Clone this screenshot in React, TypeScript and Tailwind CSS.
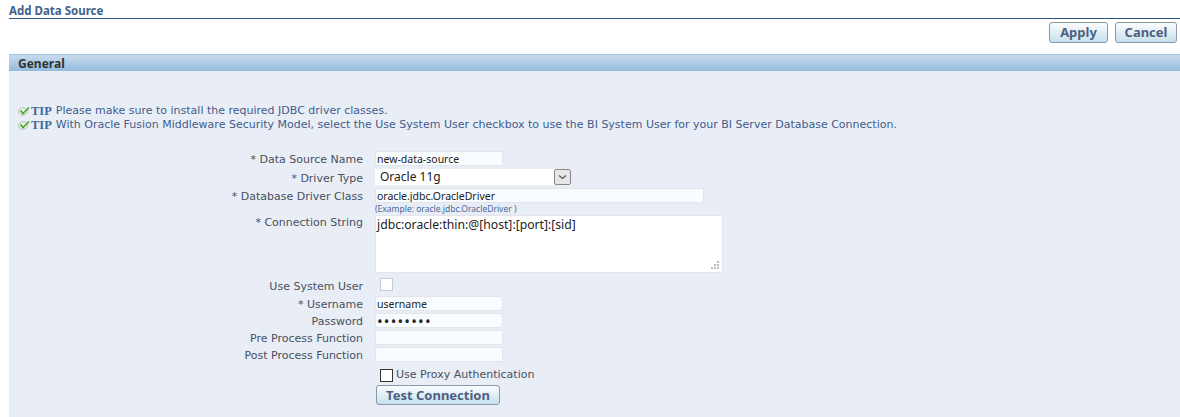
const FONT = "font-['Tahoma','DejaVu_Sans',sans-serif]";
const FIELD_FONT = "font-['Noto_Sans',sans-serif]";
const BOLD_FONT = "font-['Noto_Sans',sans-serif] font-bold";

const INPUT = `block h-[15px] rounded-[2px] border border-[#e1e5eb] bg-[#f8fcff] pl-px text-[10.5px] leading-[13px] text-[#222] ${FIELD_FONT}`;
const BTN = `rounded-[3px] border border-[#8b98a8] bg-gradient-to-b from-[#fbfdfe] to-[#c6e0ec] text-[13px] text-[#4f5f80] ${BOLD_FONT}`;

function Tip({ text }: { text: string }) {
  return (
    <div className="flex h-[14px] items-center text-[11px] leading-[14px] text-[#3f5c8c]">
      <svg width="12" height="10" viewBox="0 0 12 10" className="mr-px">
        <ellipse cx="5" cy="5.5" rx="4.5" ry="3.8" fill="#e8f3e4" stroke="#9fb8ac" strokeWidth="0.8" />
        <path d="M2.5 4.5 L5 7.5 L11 1.5" fill="none" stroke="#45a528" strokeWidth="1.6" />
      </svg>
      <b className="mr-[4px] font-['Liberation_Serif',serif] text-[12.5px] text-[#3d6a9e]">TIP</b>
      {text}
    </div>
  );
}

function Row({
  label,
  required,
  className,
  labelClass,
  children,
}: {
  label?: string;
  required?: boolean;
  className?: string;
  labelClass?: string;
  children: React.ReactNode;
}) {
  return (
    <div className={"flex " + (className ?? "")}>
      <div className={"h-[15px] w-[354px] text-right text-[11px] leading-[15px] text-[#475060] " + (labelClass ?? "pt-px")}>
        {required && "* "}
        {label}
      </div>
      <div className="ml-[12px]">{children}</div>
    </div>
  );
}

export default function App() {
  return (
    <div className={`h-[417px] w-[1180px] overflow-hidden bg-white pl-[9px] ${FONT}`}>
      <div className={`h-[19px] border-b border-[#2f5587] pt-[4px] text-[11.5px] leading-[14px] text-[#3f5f8f] ${BOLD_FONT}`}>
        Add Data Source
      </div>
      <div className="flex h-[35px] justify-end gap-[7px] pt-[3px] pr-[3px]">
        <button className={`${BTN} h-[21px] w-[59px]`}>Apply</button>
        <button className={`${BTN} h-[21px] w-[62px]`}>Cancel</button>
      </div>
      <div className={`h-[17px] border-t border-[#a5c1dc] bg-gradient-to-b from-[#c8dbed] to-[#94bbdc] pl-[9px] text-[12px] leading-[17px] text-[#333] ${BOLD_FONT}`}>
        General
      </div>
      <div className="h-[346px] bg-[#e9eef6]">
        <div className="pl-[9px] pt-[33px]">
          <Tip text="Please make sure to install the required JDBC driver classes." />
          <Tip text="With Oracle Fusion Middleware Security Model, select the Use System User checkbox to use the BI System User for your BI Server Database Connection." />
        </div>
        <div className="pt-[19px]">
          <Row label="Data Source Name" required>
            <input readOnly value="new-data-source" className={`${INPUT} w-[128px]`} />
          </Row>
          <Row label="Driver Type" required className="mt-[3px]" labelClass="pt-[2px]">
            <div className={`flex h-[16px] w-[196px] items-center justify-between bg-white pl-[5px] text-[12px] text-[#222] ${FIELD_FONT}`}>
              Oracle 11g
              <span className="flex h-[16px] w-[17px] items-center justify-center rounded-[2px] border border-[#888] bg-[#e6e6e6]">
                <svg width="9" height="6" viewBox="0 0 9 6">
                  <path d="M1 1.5 L4.5 4.5 L8 1.5" fill="none" stroke="#555" strokeWidth="1.2" />
                </svg>
              </span>
            </div>
          </Row>
          <Row label="Database Driver Class" required className="mt-[3px]">
            <input readOnly value="oracle.jdbc.OracleDriver" className={`${INPUT} w-[329px]`} />
            <div className={`h-[12px] text-[8.5px] leading-[12px] text-[#44689c] ${FIELD_FONT}`}>(Example: oracle.jdbc.OracleDriver )</div>
          </Row>
          <Row label="Connection String" required labelClass="pt-0">
            <div className={`relative h-[58px] w-[348px] rounded-[2px] border border-[#e1e5eb] bg-white pl-px text-[12.2px] leading-[17px] text-[#222] ${FIELD_FONT}`}>
              jdbc:oracle:thin:@[host]:[port]:[sid]
              <svg width="9" height="9" viewBox="0 0 9 9" className="absolute bottom-[2px] right-[2px]" fill="#bbb">
                <rect x="6" y="0" width="2" height="2" />
                <rect x="3" y="3" width="2" height="2" />
                <rect x="6" y="3" width="2" height="2" />
                <rect x="0" y="6" width="2" height="2" />
                <rect x="3" y="6" width="2" height="2" />
                <rect x="6" y="6" width="2" height="2" />
              </svg>
            </div>
          </Row>
          <Row label="Use System User" className="mt-[5px]">
            <div className="ml-[5px] h-[13px] w-[13px] border border-[#c8ccd2] bg-white" />
          </Row>
          <Row label="Username" required className="mt-[3px]">
            <input readOnly value="username" className={`${INPUT} w-[128px]`} />
          </Row>
          <Row label="Password" className="mt-[2px]">
            <input readOnly type="password" value="password" className={`${INPUT} w-[128px] text-[15px] tracking-[1.2px]`} />
          </Row>
          <Row label="Pre Process Function" className="mt-[2px]">
            <input readOnly className={`${INPUT} w-[128px]`} />
          </Row>
          <Row label="Post Process Function" className="mt-[2px]">
            <input readOnly className={`${INPUT} w-[128px]`} />
          </Row>
          <Row className="mt-[6px]">
            <div className="ml-[5px] flex items-center text-[11px] leading-[14px] text-[#475060]">
              <span className="mr-[3px] h-[13px] w-[13px] border border-[#333] bg-white" />
              Use Proxy Authentication
            </div>
          </Row>
          <Row>
            <button className={`${BTN} ml-px h-[20px] w-[124px]`}>Test Connection</button>
          </Row>
        </div>
      </div>
    </div>
  );
}
